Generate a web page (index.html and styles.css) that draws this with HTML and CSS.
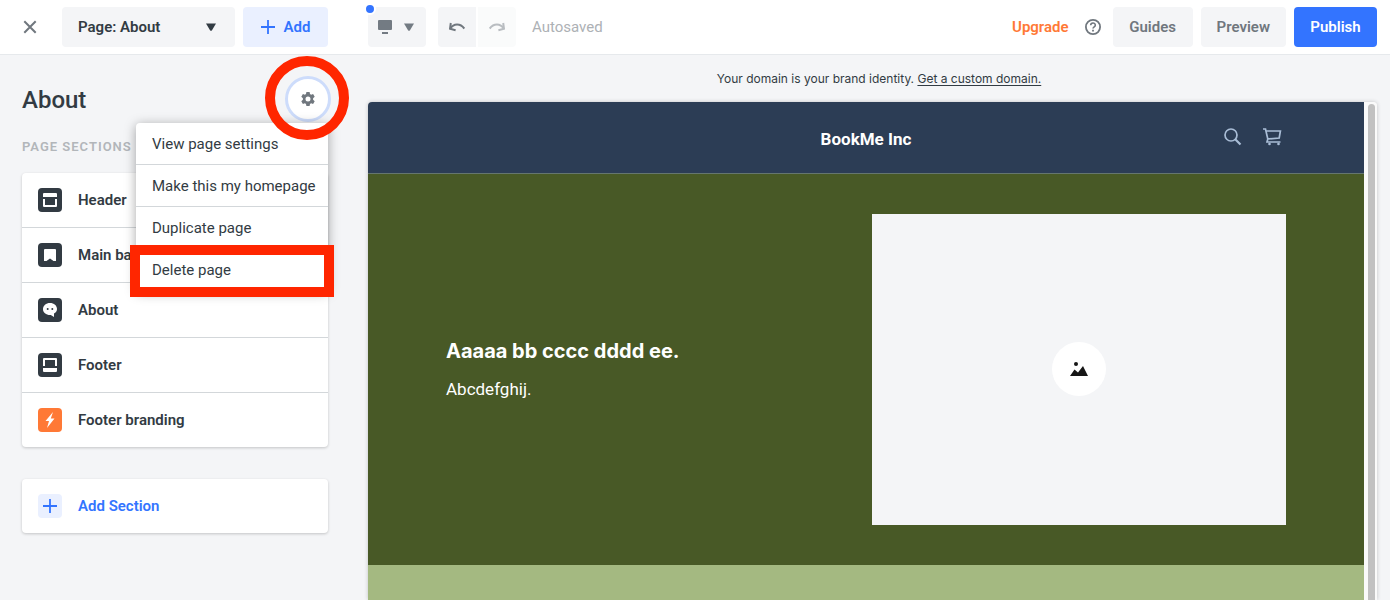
FILE: index.html
```html
<!DOCTYPE html>
<html lang="en">
<head>
<meta charset="utf-8">
<title>Page editor</title>
<link rel="stylesheet" href="styles.css">
</head>
<body>
<header class="toolbar">
  <button class="close" type="button" aria-label="Close"><svg width="14" height="14" viewBox="0 0 14 14"><path d="M1.3 1.3l11.4 11.4M12.7 1.3L1.3 12.7" stroke="#70777e" stroke-width="2"/></svg></button>
  <button class="btn page-picker" type="button">Page: About <svg width="10" height="8" viewBox="0 0 10 8"><path d="M0 .5h10L6 7.2q-1 1.2-2 0z" fill="#323b43"/></svg></button>
  <button class="btn add" type="button"><svg width="14" height="14" viewBox="0 0 14 14"><path d="M7 0v14M0 7h14" stroke="#3374ff" stroke-width="1.8"/></svg>Add</button>
  <button class="btn device" type="button" aria-label="Device"><svg width="14" height="14" viewBox="0 0 14 14"><path d="M1 0h12q1 0 1 1v8q0 1-1 1H1q-1 0-1-1V1q0-1 1-1zM4 12h6v2H4z" fill="#737b83"/></svg><svg width="10" height="8" viewBox="0 0 10 8"><path d="M0 .5h10L6 7.2q-1 1.2-2 0z" fill="#737b83"/></svg><span class="dot"></span></button>
  <div class="history">
    <button class="btn undo" type="button" aria-label="Undo"><svg width="16" height="10" viewBox="0 0 16 10"><path d="M1.8 1L1 6.8l5.6 1.4M1.3 6.6C4.5 1 11.5 1 15.3 6.6" fill="none" stroke="#70777e" stroke-width="2"/></svg></button>
    <button class="btn redo" type="button" aria-label="Redo" disabled><svg width="16" height="10" viewBox="0 0 16 10"><path d="M14.2 1l.8 5.8-5.6 1.4M14.7 6.6C11.5 1 4.5 1 .7 6.6" fill="none" stroke="#b9bdc1" stroke-width="2"/></svg></button>
  </div>
  <span class="saved">Autosaved</span>
  <a class="upgrade" href="#">Upgrade</a>
  <button class="help" type="button" aria-label="Help"><svg width="16" height="16" viewBox="0 0 16 16" fill="none" stroke="#70777e"><circle cx="8" cy="8" r="7.1" stroke-width="1.8"/><path d="M5.7 6.3C5.7 3.2 10.3 3.2 10.3 6.2 10.3 7.8 8 7.8 8 9.6" stroke-width="1.6"/><path d="M8 10.8v1.8" stroke-width="1.8"/></svg></button>
  <div class="actions">
    <button class="btn" type="button">Guides</button>
    <button class="btn" type="button">Preview</button>
    <button class="btn publish" type="button">Publish</button>
  </div>
</header>
<div class="workspace">
  <aside class="sidebar">
    <div class="title-row">
      <h1>About</h1>
      <div class="settings">
        <button class="gear" type="button" aria-label="Page settings"><svg width="16" height="16" viewBox="0 0 16 16"><path fill="#70777e" fill-rule="evenodd" d="M6.4 1h3.2l.4 2.1 1.1.6 2-.7 1.6 2.7-1.6 1.5v1.6l1.6 1.5-1.6 2.7-2-.7-1.1.6-.4 2.1H6.400l-.4-2.100-1.100-.6-2 .7-1.600-2.700 1.600-1.500V7.200L1.300 5.700l1.600-2.700 2 .7L6 3.100zM8 5.500a2.500 2.500 0 1 0 0 5 2.500 2.500 0 0 0 0-5z"/></svg></button>
        <div class="menu">
          <button type="button">View page settings</button>
          <button type="button">Make this my homepage</button>
          <button type="button">Duplicate page</button>
          <button class="marked" type="button">Delete page</button>
        </div>
        <span class="ring"></span>
      </div>
    </div>
    <h2>PAGE SECTIONS</h2>
    <div class="card">
      <button class="row" type="button"><span class="icon"><svg width="14" height="14" viewBox="0 0 14 14"><path d="M1 0h12q1 0 1 1v3H0V1q0-1 1-1zM0 6h2v6h10V6h2v7q0 1-1 1H1q-1 0-1-1z" fill="#fff"/></svg></span>Header</button>
      <button class="row" type="button"><span class="icon"><svg width="14" height="14" viewBox="0 0 14 14"><path d="M2 1h10q1 0 1 1v11h-2.500L7 10.500 3.500 13H1V2q0-1 1-1z" fill="#fff"/></svg></span>Main banner</button>
      <button class="row" type="button"><span class="icon"><svg width="14" height="14" viewBox="0 0 14 14"><path d="M7 0c4 0 7 2.600 7 6 0 2.200-1.200 3.600-3 4.600V14l-3.200-2C3.300 12.300 0 9.600 0 6.200 0 2.700 3 0 7 0z" fill="#fff"/><circle cx="4.700" cy="6" r="1" fill="#323b43"/><circle cx="9.300" cy="6" r="1" fill="#323b43"/></svg></span>About</button>
      <button class="row" type="button"><span class="icon"><svg width="14" height="14" viewBox="0 0 14 14"><path d="M1 0h12q1 0 1 1v7h-2V2H2v6H0V1q0-1 1-1zM0 10h14v3q0 1-1 1H1q-1 0-1-1z" fill="#fff"/></svg></span>Footer</button>
      <button class="row" type="button"><span class="icon orange"><svg width="12" height="16" viewBox="0 0 12 16"><path d="M9 0L1.500 9H5l-2 7 7.500-9.400H6.800z" fill="#fff"/></svg></span>Footer branding</button>
    </div>
    <div class="card">
      <button class="row new" type="button"><span class="icon pale"><svg width="14" height="14" viewBox="0 0 14 14"><path d="M7 0v14M0 7h14" stroke="#3374ff" stroke-width="1.8"/></svg></span>Add Section</button>
    </div>
  </aside>
  <main class="preview">
    <p class="domain">Your domain is your brand identity. <a href="#">Get a custom domain.</a></p>
    <div class="frame">
      <div class="site">
        <div class="site-header">
          <span class="brand">BookMe Inc</span>
          <div class="site-tools">
            <svg width="18" height="18" viewBox="0 0 18 18" fill="none" stroke="#a9bdd6"><circle cx="7" cy="7" r="6" stroke-width="1.700"/><path d="M11.200 11.200L16.500 16.500" stroke-width="2.200"/></svg>
            <svg width="20" height="18" viewBox="0 0 20 18" fill="none" stroke="#a9bdd6" stroke-width="1.700"><path d="M1 1h2.500l2.300 10M4.200 3h14.200l-1.200 7-11.400 1-.8 3h13.500"/><circle cx="7.500" cy="16" r="1.300" fill="#a9bdd6" stroke="none"/><circle cx="16.500" cy="16" r="1.300" fill="#a9bdd6" stroke="none"/></svg>
          </div>
        </div>
        <section class="banner">
          <div class="copy">
            <h3>Aaaaa bb cccc dddd ee.</h3>
            <p>Abcdefghij.</p>
          </div>
          <div class="photo"><span class="badge"><svg width="18" height="14" viewBox="0 0 18 14"><path d="M0 14l4.500-6.500L8 10.500l5-6.500 5 10z" fill="#161616"/><circle cx="6" cy="2" r="2" fill="#161616"/></svg></span></div>
        </section>
        <div class="next"></div>
      </div>
      <div class="track"><div class="thumb"></div></div>
    </div>
  </main>
</div>
</body>
</html>
```
FILE: styles.css
```css
* { box-sizing: border-box; }
body {
  margin: 0;
  height: 100vh;
  overflow: hidden;
  display: flex;
  flex-direction: column;
  background: #f4f5f7;
  color: #323b43;
  font: 15px/20px Roboto, "Liberation Sans", sans-serif;
}
button {
  font: inherit;
  color: inherit;
  border: 0;
  padding: 0;
  background: none;
}
svg { display: block; flex: none; }
h1, h2, h3, p { margin: 0; }

.toolbar {
  flex: none;
  display: flex;
  align-items: center;
  height: 55px;
  padding: 0 13px 1px 23px;
  background: #fff;
  border-bottom: 1px solid #e6e9ec;
}
.close { margin-right: 25px; }
.btn {
  display: flex;
  align-items: center;
  justify-content: center;
  height: 40px;
  padding: 0 16px;
  border-radius: 4px;
  background: #f4f5f7;
  color: #70777e;
  font-weight: 600;
}
.page-picker {
  justify-content: space-between;
  width: 173px;
  padding-right: 19px;
  color: #323b43;
}
.add {
  gap: 9px;
  width: 85px;
  margin-left: 8px;
  background: #eaf0ff;
  color: #3374ff;
}
.device {
  position: relative;
  gap: 12px;
  width: 58px;
  margin-left: 40px;
  padding: 0 10px 0 8px;
}
.dot {
  position: absolute;
  top: -4px;
  left: -4px;
  width: 12px;
  height: 12px;
  border: 2px solid #fff;
  border-radius: 50%;
  background: #3374ff;
}
.history { display: flex; gap: 2px; margin-left: 12px; }
.history .btn { width: 38px; padding: 0; }
.undo { border-radius: 4px 0 0 4px; }
.history .redo { border-radius: 0 4px 4px 0; background: #fafbfb; }
.saved { margin-left: 16px; color: #adb1b5; }
.upgrade {
  margin-left: auto;
  color: #ff7936;
  font-weight: 600;
  text-decoration: none;
}
.help { margin: 0 12px 0 16px; }
.actions { display: flex; gap: 8px; }
.actions .btn { min-width: 80px; }
.actions .publish { min-width: 83px; background: #3374ff; color: #fff; }

.workspace { flex: 1; display: flex; min-height: 0; }
.sidebar { flex: none; width: 368px; padding: 20px 40px 0 22px; }
.title-row {
  display: flex;
  align-items: center;
  justify-content: space-between;
  height: 48px;
}
h1 { padding-top: 2px; font-size: 24px; line-height: 32px; font-weight: 500; }
h2 {
  margin: 14px 0 16px;
  color: #b2b6ba;
  font-size: 13px;
  line-height: 20px;
  font-weight: 600;
  letter-spacing: 1px;
}
.settings { position: relative; }
.gear {
  display: grid;
  place-items: center;
  width: 46px;
  height: 46px;
  margin-right: -3px;
  border: 3px solid #cddcfb;
  border-radius: 50%;
  background: #fff;
}
.menu {
  position: absolute;
  top: 47px;
  right: 0;
  width: 192px;
  border-radius: 4px;
  background: #fff;
  box-shadow: 0 2px 12px rgba(0, 0, 0, .35);
}
.menu button {
  display: block;
  width: 100%;
  height: 42px;
  padding: 0 16px;
  border-bottom: 1px solid #d3d7da;
  text-align: left;
  white-space: nowrap;
}
.menu .marked {
  position: relative;
  border-bottom: 0;
}
.marked::after {
  content: "";
  position: absolute;
  inset: -4px -6px -6px;
  border: 10px solid #ff2600;
}
.ring {
  position: absolute;
  top: -20px;
  left: -20px;
  width: 84px;
  height: 84px;
  border: 10px solid #ff2600;
  border-radius: 50%;
  pointer-events: none;
}
.card {
  margin-bottom: 32px;
  border-radius: 4px;
  background: #fff;
  box-shadow: 0 1px 3px rgba(0, 0, 0, .2);
}
.row {
  display: flex;
  align-items: center;
  gap: 16px;
  width: 100%;
  height: 55px;
  padding: 0 16px;
  border-bottom: 1px solid #d3d7da;
  font-weight: 600;
}
.row:last-child { height: 54px; border-bottom: 0; }
.new { color: #3374ff; }
.icon {
  display: grid;
  place-items: center;
  width: 24px;
  height: 24px;
  border-radius: 4px;
  background: #323b43;
}
.orange { background: #ff7936; }
.pale { background: #eaf0ff; }

.preview { flex: 1; display: flex; flex-direction: column; min-width: 0; }
.domain {
  padding: 14px 0 13px;
  font-family: Inter, Roboto, sans-serif;
  font-size: 12px;
  text-align: center;
}
.domain a { color: inherit; text-underline-offset: 2px; }
.frame {
  flex: 1;
  display: flex;
  margin-right: 13px;
  border-radius: 4px 4px 0 0;
  overflow: hidden;
  box-shadow: 0 0 4px rgba(0, 0, 0, .2);
}
.site { flex: 1; display: flex; flex-direction: column; }
.site-header {
  display: grid;
  grid-template-columns: 1fr auto 1fr;
  align-items: center;
  height: 72px;
  padding: 0 82px;
  border-bottom: 1px solid #65766f;
  background: #2c3d55;
}
.brand {
  grid-column: 2;
  padding-top: 2px;
  color: #fff;
  font-size: 17px;
  line-height: 24px;
  font-weight: 700;
}
.site-tools {
  display: flex;
  justify-content: flex-end;
  gap: 20px;
  padding-bottom: 2px;
}
.banner {
  display: grid;
  grid-template-columns: 1fr 1fr;
  gap: 12px;
  align-items: center;
  padding: 40px 78px;
  background: #485926;
  color: #fff;
}
.copy h3 {
  margin-bottom: 12px;
  font-family: Inter, Roboto, sans-serif;
  font-size: 20px;
  line-height: 28px;
  font-weight: 700;
}
.copy p { font-size: 17px; line-height: 24px; }
.photo {
  display: grid;
  place-items: center;
  aspect-ratio: 4 / 3;
  background: #f4f5f7;
}
.badge {
  display: grid;
  place-items: center;
  width: 54px;
  height: 54px;
  border-radius: 50%;
  background: #fff;
}
.next { flex: 1; background: #a4b981; }
.track { width: 13px; padding: 2px 2px 0 4px; background: #fafafa; }
.thumb {
  width: 7px;
  height: 100%;
  border-radius: 4px 4px 0 0;
  background: #c1c1c1;
}
```
